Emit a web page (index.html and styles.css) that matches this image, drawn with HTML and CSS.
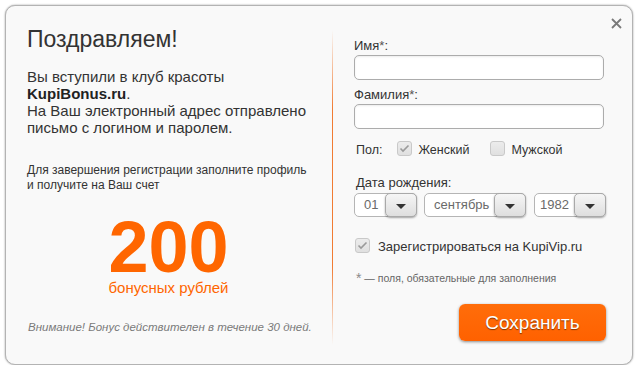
FILE: index.html
```html
<!DOCTYPE html>
<html lang="ru">
<head>
<meta charset="utf-8">
<title>Поздравляем!</title>
<link rel="stylesheet" href="styles.css">
</head>
<body>
<div class="dialog">
  <button class="close" aria-label="Закрыть">
    <svg width="11" height="11" viewBox="0 0 11 11"><path d="M1 1 L10 10 M10 1 L1 10" stroke="#7a7a7a" stroke-width="1.8" fill="none"/></svg>
  </button>
  <div class="left">
    <h1 class="title">Поздравляем!</h1>
    <p class="intro">Вы вступили в клуб красоты<br><b>KupiBonus.ru</b>.<br>На Ваш электронный адрес отправлено<br>письмо с логином и паролем.</p>
    <p class="hint">Для завершения регистрации заполните профиль<br>и получите на Ваш счет</p>
    <div class="bonus">200</div>
    <div class="bonus-label">бонусных рублей</div>
    <p class="note">Внимание! Бонус действителен в течение 30 дней.</p>
  </div>
  <div class="divider"></div>
  <div class="right">
    <label class="field-label label-first">Имя<span class="req">*</span>:</label>
    <div class="input"></div>
    <label class="field-label">Фамилия<span class="req">*</span>:</label>
    <div class="input"></div>
    <div class="gender">
      <span class="gender-title">Пол:</span>
      <span class="check checked"><svg width="11" height="9" viewBox="0 0 11 9"><path d="M1.5 4.5 L4 7 L9.5 1.5" stroke="#9a9a9a" stroke-width="1.6" fill="none"/></svg></span>
      <span class="check-text">Женский</span>
      <span class="check check-second"></span>
      <span class="check-text">Мужской</span>
    </div>
    <label class="field-label label-date">Дата рождения:</label>
    <div class="selects">
      <div class="select sel-day"><span class="sel-value">01</span><span class="sel-btn"><i class="tri"></i></span></div>
      <div class="select sel-month"><span class="sel-value">сентябрь</span><span class="sel-btn"><i class="tri"></i></span></div>
      <div class="select sel-year"><span class="sel-value">1982</span><span class="sel-btn"><i class="tri"></i></span></div>
    </div>
    <div class="register">
      <span class="check checked"><svg width="11" height="9" viewBox="0 0 11 9"><path d="M1.5 4.5 L4 7 L9.5 1.5" stroke="#9a9a9a" stroke-width="1.6" fill="none"/></svg></span>
      <span class="register-text">Зарегистрироваться на KupiVip.ru</span>
    </div>
    <p class="footnote"><span class="star">*</span> — поля, обязательные для заполнения</p>
    <div class="actions"><button class="save">Сохранить</button></div>
  </div>
</div>
</body>
</html>
```

FILE: styles.css
```css
html, body {
  margin: 0;
  padding: 0;
  background: #ffffff;
}
body {
  font-family: "Liberation Sans", Arial, sans-serif;
  color: #333333;
}
.dialog {
  position: relative;
  box-sizing: border-box;
  margin: 5px 0 0 5px;
  width: 628px;
  height: 360px;
  background: #f9f9f9;
  border: 1px solid #b3b3b3;
  border-radius: 10px;
  box-shadow: 0 0 2px rgba(0,0,0,0.4);
  display: flex;
  white-space: nowrap;
}
.close {
  position: absolute;
  top: 11px;
  left: 604px;
  width: 13px;
  height: 13px;
  padding: 1px;
  border: 0;
  background: transparent;
  display: flex;
  align-items: center;
  justify-content: center;
}
.left {
  width: 326px;
  box-sizing: border-box;
  padding: 19px 22px 0 21px;
}
.title {
  margin: 0;
  font-size: 23px;
  line-height: 28px;
  font-weight: normal;
  color: #333;
}
.intro {
  margin: 15px 0 0;
  font-size: 15px;
  line-height: 17px;
  color: #333;
}
.intro b { color: #222; }
.hint {
  margin: 27px 0 0;
  font-size: 12px;
  line-height: 15px;
  color: #333;
}
.bonus {
  margin-top: 22px;
  text-align: center;
  font-size: 72px;
  line-height: 64px;
  font-weight: bold;
  color: #ff6600;
}
.bonus-label {
  margin-top: 0;
  text-align: center;
  font-size: 15px;
  line-height: 18px;
  color: #ff6600;
}
.note {
  margin: 23px 0 0 1px;
  font-size: 11.5px;
  line-height: 15px;
  font-style: italic;
  color: #7a7a7a;
}
.divider {
  width: 1px;
  margin-top: 24px;
  height: 315px;
  background: linear-gradient(to bottom, rgba(240,110,30,0) 0%, rgba(240,110,30,0.9) 25%, rgba(240,110,30,0.9) 75%, rgba(240,110,30,0) 100%);
}
.right {
  flex: 1;
  box-sizing: border-box;
  padding: 32px 26px 0 21px;
  display: flex;
  flex-direction: column;
}
.field-label {
  display: block;
  margin-top: 7px;
  font-size: 13px;
  line-height: 16px;
  color: #333;
}
.label-first { margin-top: 0; }
.req { color: #555; }
.input {
  box-sizing: border-box;
  margin-top: 1px;
  width: 250px;
  height: 25px;
  background: #ffffff;
  border: 1px solid #acacac;
  border-radius: 5px;
  box-shadow: inset 0 1px 2px rgba(0,0,0,0.08);
}
.gender {
  margin-top: 11px;
  display: flex;
  align-items: center;
  height: 16px;
  font-size: 12.5px;
  color: #333;
}
.gender-title { margin-left: 2px; margin-right: 15px; padding-top: 3px; }
.check {
  box-sizing: border-box;
  width: 15px;
  height: 15px;
  border: 1px solid #c9c9c9;
  border-radius: 3px;
  background: linear-gradient(#ececec, #e0e0e0);
  display: inline-flex;
  align-items: center;
  justify-content: center;
  flex: none;
}
.check-text { margin-left: 6px; padding-top: 3px; }
.check-second { margin-left: 21px; }
.label-date { margin-top: 19px; padding-left: 2px; }
.selects {
  margin-top: 2px;
  display: flex;
  gap: 7px;
}
.select {
  position: relative;
  box-sizing: border-box;
  height: 24px;
  display: flex;
  background: #fff;
  border: 1px solid #b5b5b5;
  border-radius: 5px;
}
.sel-day { width: 63px; }
.sel-month { width: 102px; }
.sel-year { width: 72px; margin-left: 1px; }
.sel-value {
  flex: 1;
  padding-left: 9px;
  font-size: 13px;
  line-height: 22px;
  color: #6a6a6a;
}
.sel-year .sel-value { padding-left: 5px; }
.sel-btn {
  box-sizing: border-box;
  width: 32px;
  height: 24px;
  margin: -1px -1px 0 0;
  border: 1px solid #a9a9a9;
  border-radius: 5px;
  background: linear-gradient(#f6f6f6, #dedede);
  box-shadow: 0 1px 2px rgba(0,0,0,0.35);
  display: flex;
  align-items: center;
  justify-content: center;
  flex: none;
}
.tri {
  width: 0;
  height: 0;
  border-left: 5px solid transparent;
  border-right: 5px solid transparent;
  border-top: 5px solid #333;
  margin-top: 2px;
}
.register {
  margin-top: 21px;
  display: flex;
  align-items: center;
  height: 15px;
  padding-left: 1px;
  font-size: 13px;
  color: #333;
}
.register-text { margin-left: 8px; padding-top: 2px; }
.footnote {
  margin: 18px 0 0 2px;
  font-size: 10.5px;
  line-height: 14px;
  color: #666;
}
.star { font-size: 14px; color: #8a8a8a; vertical-align: -1px; }
.actions {
  margin-top: 19px;
  display: flex;
  justify-content: flex-end;
}
.save {
  width: 147px;
  height: 37px;
  border: 0;
  border-radius: 6px;
  background: linear-gradient(#ff6d0a, #ff6100);
  box-shadow: 0 1px 3px rgba(0,0,0,0.45);
  font-family: "Liberation Sans", Arial, sans-serif;
  font-size: 19px;
  color: #ffffff;
  text-shadow: 0 1px 1px rgba(0,0,0,0.5);
  padding: 0;
}
```
